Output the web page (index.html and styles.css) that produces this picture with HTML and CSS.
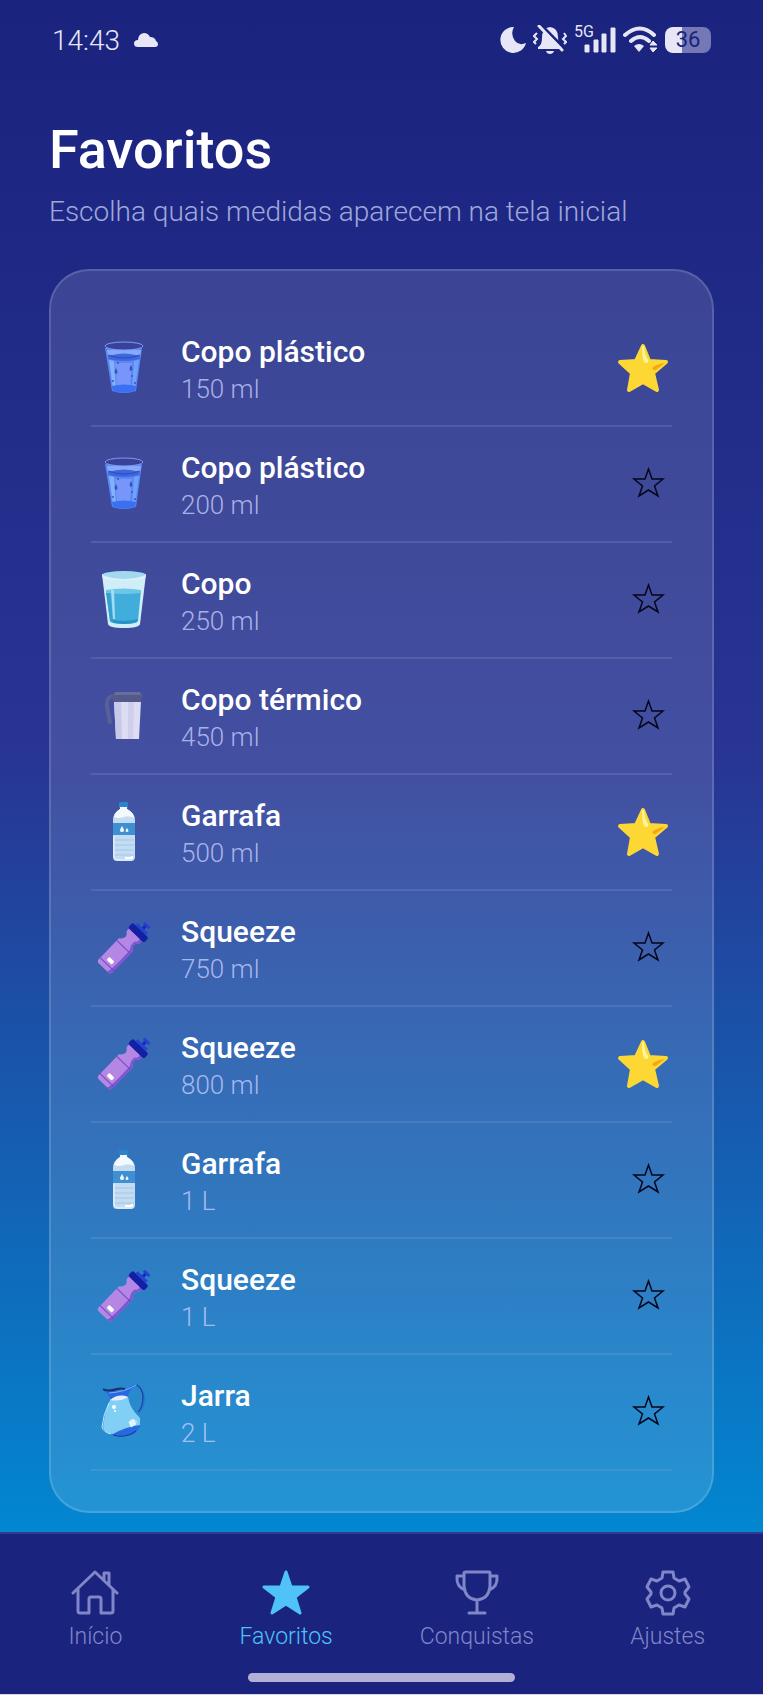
FILE: index.html
```html
<!DOCTYPE html>
<html lang="pt-BR">
<head>
    <meta charset="UTF-8">
    <meta name="viewport" content="width=device-width, initial-scale=1.0">
    <link rel="stylesheet" href="styles.css">
    <title>Favoritos</title>
</head>
<body>
    <!-- Shared drawings -->
    <svg class="sprites" aria-hidden="true">
        <symbol id="plastic-cup" viewBox="0 0 66 66">
            <path d="M14 13 L21 56 Q33 60 45 56 L51 13Z" fill="#5b86f5"/>
            <path d="M16 15 L50 15 L49 22 Q33 26 17 22Z" fill="#85a9fb"/>
            <path d="M17 21 Q33 16 49 21 L48.500 24 Q33 28 17.500 24Z" fill="#3f66dd"/>
            <path d="M24 28 L41 28 L39 52 L26 52Z" fill="#7795fb"/>
            <path d="M18 25 L22 53 L25 54 L23 26Z" fill="#82b2fb"/>
            <path d="M48 25 L44 53 L41 54 L43 26Z" fill="#6fa2fb"/>
            <path d="M21 51 Q33 48 45 51 L44 56 Q33 59 22 56Z" fill="#3a71f0"/>
            <ellipse cx="33" cy="11" rx="19" ry="4" fill="#3a4199" stroke="#7d9df2" stroke-width="1"/>
            <path d="M17 20 Q33 26 49 20" fill="none" stroke="#2c4bb8" stroke-width="1"/>
            <g fill="#3556bb">
                <path d="M25 33 q-3 5 0 6 q3 -1 0 -6Z"/>
                <path d="M40 30 q-3 5 0 6 q3 -1 0 -6Z"/>
                <circle cx="27" cy="28" r="1"/>
                <circle cx="41" cy="41" r="1"/>
                <circle cx="22" cy="46" r="1"/>
                <circle cx="44" cy="48" r="1"/>
            </g>
        </symbol>

        <symbol id="glass" viewBox="0 0 66 66">
            <path d="M11 7 L17 57 Q18 61 33 61 Q48 61 49 57 L55 7Z" fill="#cfeef8"/>
            <path d="M15 23 L50 23 L47 54 Q46 57 33 57 Q20 57 19 54Z" fill="#41addb"/>
            <path d="M15 23 Q33 20 50 23 L50 26 Q33 28 16 26Z" fill="#6cc6e8"/>
            <path d="M19 52 Q33 56 47 52 L46 55 Q33 59 20 55Z" fill="#2793c5"/>
            <path d="M15 26 L19 54 L22 55 L19 26Z" fill="#379fd0"/>
            <path d="M20 23 L23 23 L24 52 L22 52Z" fill="#a4def2"/>
            <ellipse cx="33" cy="8" rx="22" ry="4" fill="#a3d9f0"/>
            <path d="M11 8 Q33 16 55 8 L54 12 Q33 15 12 12Z" fill="#d8f2fa"/>
        </symbol>

        <symbol id="thermal-cup" viewBox="0 0 66 66">
            <path d="M25 13 Q15 12 16 24 L19 39" fill="none" stroke="#5a6096" stroke-width="4" stroke-linecap="round"/>
            <path d="M23 18 L50 18 L48 56 L25 56Z" fill="#dcdcf2"/>
            <path d="M23 18 L30 18 L31 56 L25 56Z" fill="#c8c9e8"/>
            <path d="M37 18 L43 18 L42 56 L37 56Z" fill="#cfcfeb"/>
            <path d="M24 9 L49 9 L52 12 L50 19 L23 19 L20 14Z" fill="#535989"/>
            <path d="M24 9 L49 9 L50 12 L23 12Z" fill="#676d9e"/>
        </symbol>

        <symbol id="bottle" viewBox="0 0 66 66">
            <rect x="28" y="3" width="9" height="6" rx="1" fill="#2c83cc"/>
            <path d="M29 8 H36 V10 Q44 14 44 21 V58 Q44 62 40 62 H26 Q22 62 22 58 V21 Q22 14 29 10Z" fill="#c3dcf2"/>
            <path d="M29 8 H36 V10 Q42 13 43 19 Q38 16 33 18 Q27 20 23 18 Q24 13 29 10Z" fill="#f3faff"/>
            <path d="M22 24 H44 V36 H22Z" fill="#3e90d2"/>
            <path d="M31 27 q-4 6 0 6 q4 0 0 -6Z M36 29 q-3 4 0 4 q3 0 0 -4Z" fill="#eaf6ff"/>
            <path d="M23 41 H43 M23 46 H43 M23 51 H43 M23 56 H43" stroke="#a3c6e6" stroke-width="1"/>
            <path d="M23 37 V58 Q24 61 27 61 H41" fill="none" stroke="#eef8ff" stroke-width="1"/>
            <path d="M34 59 H41 V57" fill="none" stroke="#fff" stroke-width="2"/>
        </symbol>

        <symbol id="squeeze" viewBox="0 0 66 66">
            <g transform="rotate(44 33 31)">
                <path d="M25 14 H42 Q44 18 40 21 Q38 25 43 29 V58 Q43 61 40 61 H27 Q24 61 24 58 V29 Q29 25 27 21 Q23 18 25 14Z" fill="#b487e4"/>
                <path d="M39 14 H42 Q44 18 40 21 Q38 25 43 29 V58 Q43 61 40 61 H38 Q41 60 40 30 Q36 24 38 20 Q41 18 39 14Z" fill="#8154d2"/>
                <path d="M24 32 H43 M24 56 H43" stroke="#7049c7" stroke-width="1"/>
                <rect x="30" y="49" width="7" height="4" rx="1" fill="#fff"/>
                <rect x="23" y="8" width="22" height="7" rx="2" fill="#1420a3"/>
                <path d="M27 5 H41 V8 H27Z" fill="#2342d8"/>
                <path d="M33 1 H36 V5 H33Z" fill="#1727a8"/>
                <rect x="31" y="-1" width="8" height="3" rx="1" fill="#2540d5"/>
            </g>
        </symbol>

        <symbol id="jug" viewBox="0 0 66 66">
            <path d="M39 9 Q45 3 50 10 Q57 22 48 34" fill="none" stroke="#2c72dd" stroke-width="2"/>
            <path d="M46 6 Q51 9 52 17 Q52 28 47 33" fill="none" stroke="#173a87" stroke-width="1"/>
            <path d="M12 10 Q28 15 45 6 Q36 13 37 20 Q39 32 49 41 V47 Q46 57 33 57 Q15 56 11 50 Q10 39 19 22 Q20 15 12 12Z" fill="#2869e2"/>
            <path d="M12 10 Q17 13 26 10 Q30 9 34 10" fill="none" stroke="#192f66" stroke-width="2"/>
            <path d="M18 14 Q34 13 45 6" fill="none" stroke="#6fb4f6" stroke-width="1"/>
            <path d="M19 21 Q28 15 37 18 Q39 30 49 39 V46 Q34 48 22 55 Q13 54 12 48 Q13 36 19 21Z" fill="#82cff5"/>
            <path d="M19 21 Q28 14 37 18 Q29 23 19 21Z" fill="#e6eff9"/>
            <path d="M18 24 Q12 36 11 48 Q12 53 20 55" fill="none" stroke="#c3edff" stroke-width="1"/>
            <path d="M22 56 Q34 60 45 52" fill="none" stroke="#153988" stroke-width="1"/>
            <circle cx="23" cy="28" r="2" fill="#fff"/>
            <circle cx="24" cy="32" r="1" fill="#fff"/>
            <path d="M38 43 L42 40 L45 45 L40 48Z M43 41 L46 43" fill="#dff5ff" stroke="#dff5ff" stroke-width="1"/>
        </symbol>

        <symbol id="star-on" viewBox="0 0 58 58">
            <path d="M29 7 L35 22 L52 23 L39 34 L43 51 L29 43 L15 51 L18 34 L6 23 L22 22Z" fill="#fdd835" stroke="#fdd835" stroke-width="4" stroke-linejoin="round"/>
            <path d="M29 7 Q30 18 33 21 Q34 23 32 23 Q29 23 29 7Z" fill="#fff59d" stroke="#fff59d" stroke-width="2"/>
            <path d="M38 29 Q42 25 51 24 L43 30 Q40 33 38 29Z" fill="#f4a811"/>
        </symbol>

        <symbol id="star-off" viewBox="0 0 58 58">
            <path d="M34.500 14 L38 24 L49 24 L40.500 31 L44 41 L34.500 35 L25 41 L28.500 31 L20 24 L31 24Z" fill="none" stroke="#05061a" stroke-width="1.500"/>
        </symbol>
    </svg>

    <header class="status-bar">
        <div class="status-left">
            <time class="clock">14:43</time>
            <svg class="cloud" width="24" height="14" viewBox="0 0 24 14" aria-hidden="true">
                <path d="M4 14 Q0 14 0 10.500 Q0 7 4 7 Q4 1 10 0 Q14 0 16 4 Q21 4 22 8 Q24 9 24 11 Q24 14 21 14Z" fill="#e6e6f6"/>
            </svg>
        </div>
        <div class="status-right">
            <svg width="26" height="28" viewBox="0 0 26 28" aria-hidden="true">
                <path d="M14 1 A13 13 0 1 0 26 17 Q19 20 15 15 Q10 8 14 1Z" fill="#e6e6f6"/>
            </svg>
            <svg width="34" height="30" viewBox="0 0 34 30" aria-hidden="true">
                <path d="M5 22 Q9 20 9 13 Q9 3 17 2 Q25 3 25 12 Q25 20 29 22 L29 24 H5Z M13 26 H21 Q20 29 17 29 Q14 29 13 26Z" fill="#e6e6f6"/>
                <path d="M4 8 L1 11 L4 14 L1 17 L3 19 M31 8 L33 11 L30 14 L33 17 L31 19" fill="none" stroke="#e6e6f6" stroke-width="2"/>
                <path d="M8 0 L32 24" stroke="#1b237f" stroke-width="3"/>
                <path d="M6 1 L29 25" stroke="#e6e6f6" stroke-width="3" stroke-linecap="round"/>
            </svg>
            <div class="signal">
                <span class="network">5G</span>
                <svg width="32" height="26" viewBox="0 0 32 26" aria-hidden="true">
                    <path d="M1 18 h4 v7 h-4Z M10 13 h4 v12 h-4Z M18 7 h4 v18 h-4Z M27 1 h4 v24 h-4Z" fill="#e6e6f6" stroke="#e6e6f6" stroke-width="1" stroke-linejoin="round"/>
                </svg>
            </div>
            <svg width="35" height="28" viewBox="0 0 35 28" aria-hidden="true">
                <path d="M2 9 Q17 -4 31 9 M8 15 Q17 7 26 15" fill="none" stroke="#e6e6f6" stroke-width="4" stroke-linecap="round"/>
                <path d="M11 20 Q16 16 21 20 L16 26Z" fill="#e6e6f6"/>
                <path d="M27 19 L30 15 L34 19Z M27 22 L30 26 L34 22Z" fill="#e6e6f6" stroke="#e6e6f6" stroke-width="1"/>
            </svg>
            <div class="battery"><span>36</span></div>
        </div>
    </header>

    <main class="screen">
        <h1>Favoritos</h1>
        <p class="subtitle">Escolha quais medidas aparecem na tela inicial</p>

        <ul class="card">
            <li class="item">
                <svg class="item-icon" aria-hidden="true"><use href="#plastic-cup"/></svg>
                <div class="item-text"><h2>Copo plástico</h2><p>150 ml</p></div>
                <button class="star" aria-label="Copo plástico 150 ml" aria-pressed="true"><svg><use href="#star-on"/></svg></button>
            </li>
            <li class="item">
                <svg class="item-icon" aria-hidden="true"><use href="#plastic-cup"/></svg>
                <div class="item-text"><h2>Copo plástico</h2><p>200 ml</p></div>
                <button class="star" aria-label="Copo plástico 200 ml" aria-pressed="false"><svg><use href="#star-off"/></svg></button>
            </li>
            <li class="item">
                <svg class="item-icon" aria-hidden="true"><use href="#glass"/></svg>
                <div class="item-text"><h2>Copo</h2><p>250 ml</p></div>
                <button class="star" aria-label="Copo 250 ml" aria-pressed="false"><svg><use href="#star-off"/></svg></button>
            </li>
            <li class="item">
                <svg class="item-icon" aria-hidden="true"><use href="#thermal-cup"/></svg>
                <div class="item-text"><h2>Copo térmico</h2><p>450 ml</p></div>
                <button class="star" aria-label="Copo térmico 450 ml" aria-pressed="false"><svg><use href="#star-off"/></svg></button>
            </li>
            <li class="item">
                <svg class="item-icon" aria-hidden="true"><use href="#bottle"/></svg>
                <div class="item-text"><h2>Garrafa</h2><p>500 ml</p></div>
                <button class="star" aria-label="Garrafa 500 ml" aria-pressed="true"><svg><use href="#star-on"/></svg></button>
            </li>
            <li class="item">
                <svg class="item-icon" aria-hidden="true"><use href="#squeeze"/></svg>
                <div class="item-text"><h2>Squeeze</h2><p>750 ml</p></div>
                <button class="star" aria-label="Squeeze 750 ml" aria-pressed="false"><svg><use href="#star-off"/></svg></button>
            </li>
            <li class="item">
                <svg class="item-icon" aria-hidden="true"><use href="#squeeze"/></svg>
                <div class="item-text"><h2>Squeeze</h2><p>800 ml</p></div>
                <button class="star" aria-label="Squeeze 800 ml" aria-pressed="true"><svg><use href="#star-on"/></svg></button>
            </li>
            <li class="item">
                <svg class="item-icon" aria-hidden="true"><use href="#bottle"/></svg>
                <div class="item-text"><h2>Garrafa</h2><p>1 L</p></div>
                <button class="star" aria-label="Garrafa 1 L" aria-pressed="false"><svg><use href="#star-off"/></svg></button>
            </li>
            <li class="item">
                <svg class="item-icon" aria-hidden="true"><use href="#squeeze"/></svg>
                <div class="item-text"><h2>Squeeze</h2><p>1 L</p></div>
                <button class="star" aria-label="Squeeze 1 L" aria-pressed="false"><svg><use href="#star-off"/></svg></button>
            </li>
            <li class="item">
                <svg class="item-icon" aria-hidden="true"><use href="#jug"/></svg>
                <div class="item-text"><h2>Jarra</h2><p>2 L</p></div>
                <button class="star" aria-label="Jarra 2 L" aria-pressed="false"><svg><use href="#star-off"/></svg></button>
            </li>
        </ul>
    </main>

    <footer class="bottom">
        <nav class="tabs">
            <a href="#inicio">
                <svg viewBox="0 0 48 48" aria-hidden="true">
                    <path d="M2 24 L24 3 L46 24 M7 20 V42 Q7 44 9 44 H18 V30 Q18 28 20 28 H28 Q30 28 30 30 V44 H40 Q42 44 42 42 V20 M33 11 V4 H38 V16"/>
                </svg>
                Início
            </a>
            <a href="#favoritos" class="active" aria-current="page">
                <svg viewBox="0 0 48 48" aria-hidden="true">
                    <path d="M24 3 L29 18 L46 18 L33 28 L38 44 L24 35 L10 44 L15 28 L2 18 L19 18Z"/>
                </svg>
                Favoritos
            </a>
            <a href="#conquistas">
                <svg viewBox="0 0 48 48" aria-hidden="true">
                    <path d="M13 3 H36 Q37 3 37 4 V17 Q36 30 24 31 Q12 30 11 17 V4 Q11 3 13 3Z M11 7 H4 Q3 18 12 21 M37 7 H44 Q45 18 36 21 M24 31 V44 M16 44 H32"/>
                </svg>
                Conquistas
            </a>
            <a href="#ajustes">
                <svg viewBox="0 0 48 48" aria-hidden="true">
                    <path d="M19 3 H29 L30 9 L35 12 L41 10 L45 18 L41 23 V25 L45 30 L41 38 L35 36 L30 39 L29 45 H19 L18 39 L13 36 L7 38 L3 30 L7 25 V23 L3 18 L7 10 L13 12 L18 9Z"/>
                    <circle cx="24" cy="24" r="7"/>
                </svg>
                Ajustes
            </a>
        </nav>
        <div class="home-bar"></div>
    </footer>
</body>
</html>
```
FILE: styles.css
```css
* {
    box-sizing: border-box;
}

body {
    margin: 0;
    font-family: Roboto, "Liberation Sans", sans-serif;
    color: #fff;
    min-height: 100vh;
    display: flex;
    flex-direction: column;
    background: linear-gradient(180deg, #1a237e 0%, #283593 45%, #0288d1 91%);
}

h1, h2, p, ul {
    margin: 0;
    padding: 0;
}

.sprites {
    display: none;
}

/* Status bar */
.status-bar {
    display: flex;
    justify-content: space-between;
    align-items: center;
    height: 80px;
    padding: 0 52px;
    color: #e6e6f6;
}

.status-left, .status-right {
    display: flex;
    align-items: center;
}

.status-left {
    gap: 14px;
}

.status-right {
    gap: 7px;
}

.clock {
    font-size: 28px;
    font-weight: 300;
}

.signal {
    display: flex;
    align-items: flex-end;
}

.network {
    align-self: flex-start;
    font-size: 16px;
    line-height: 10px;
    margin-right: -10px;
}

.battery {
    width: 46px;
    height: 26px;
    border-radius: 8px;
    background: linear-gradient(90deg, #e6e6f6 37%, #7478b4 37%);
    color: #1a237e;
    font-size: 22px;
    line-height: 26px;
    text-align: center;
}

/* Content */
.screen {
    flex: 1;
    padding: 38px 49px 18px;
}

h1 {
    font-size: 54px;
    line-height: 64px;
    font-weight: 500;
}

.subtitle {
    margin: 11px 0 38px;
    font-size: 28px;
    line-height: 38px;
    font-weight: 300;
    color: #9fa8da;
}

.card {
    list-style: none;
    padding: 40px;
    border: 2px solid rgba(255, 255, 255, 0.15);
    border-radius: 40px;
    background: rgba(255, 255, 255, 0.13);
}

.item {
    display: flex;
    align-items: center;
    height: 116px;
    border-bottom: 2px solid rgba(159, 168, 218, 0.2);
}

.item-icon {
    width: 66px;
    height: 66px;
    margin-right: 24px;
}

.item-text {
    flex: 1;
    padding-top: 4px;
}

h2 {
    font-size: 30px;
    line-height: 38px;
    font-weight: 500;
}

.item p {
    font-size: 26px;
    line-height: 36px;
    font-weight: 300;
    color: rgba(197, 205, 255, 0.8);
}

.star {
    padding: 0;
    border: none;
    background: none;
    cursor: pointer;
}

.star svg {
    display: block;
    width: 58px;
    height: 58px;
}

/* Bottom navigation */
.bottom {
    height: 163px;
    padding-top: 35px;
    background: #1a237e;
    border-top: 2px solid #2f3a93;
    border-bottom: 1px solid #d5d6e8;
}

.tabs {
    display: grid;
    grid-template-columns: repeat(4, 1fr);
}

.tabs a {
    display: flex;
    flex-direction: column;
    align-items: center;
    gap: 4px;
    font-size: 23px;
    line-height: 32px;
    font-weight: 300;
    color: #8086c8;
    text-decoration: none;
}

.tabs svg {
    width: 48px;
    height: 48px;
    fill: none;
    stroke: currentColor;
    stroke-width: 3;
    stroke-linecap: round;
    stroke-linejoin: round;
}

.tabs .active {
    color: #4fc3f7;
}

.tabs .active svg {
    fill: currentColor;
}

.home-bar {
    width: 35%;
    height: 9px;
    margin: 20px auto 0;
    border-radius: 5px;
    background: #b3b0d6;
}
```
